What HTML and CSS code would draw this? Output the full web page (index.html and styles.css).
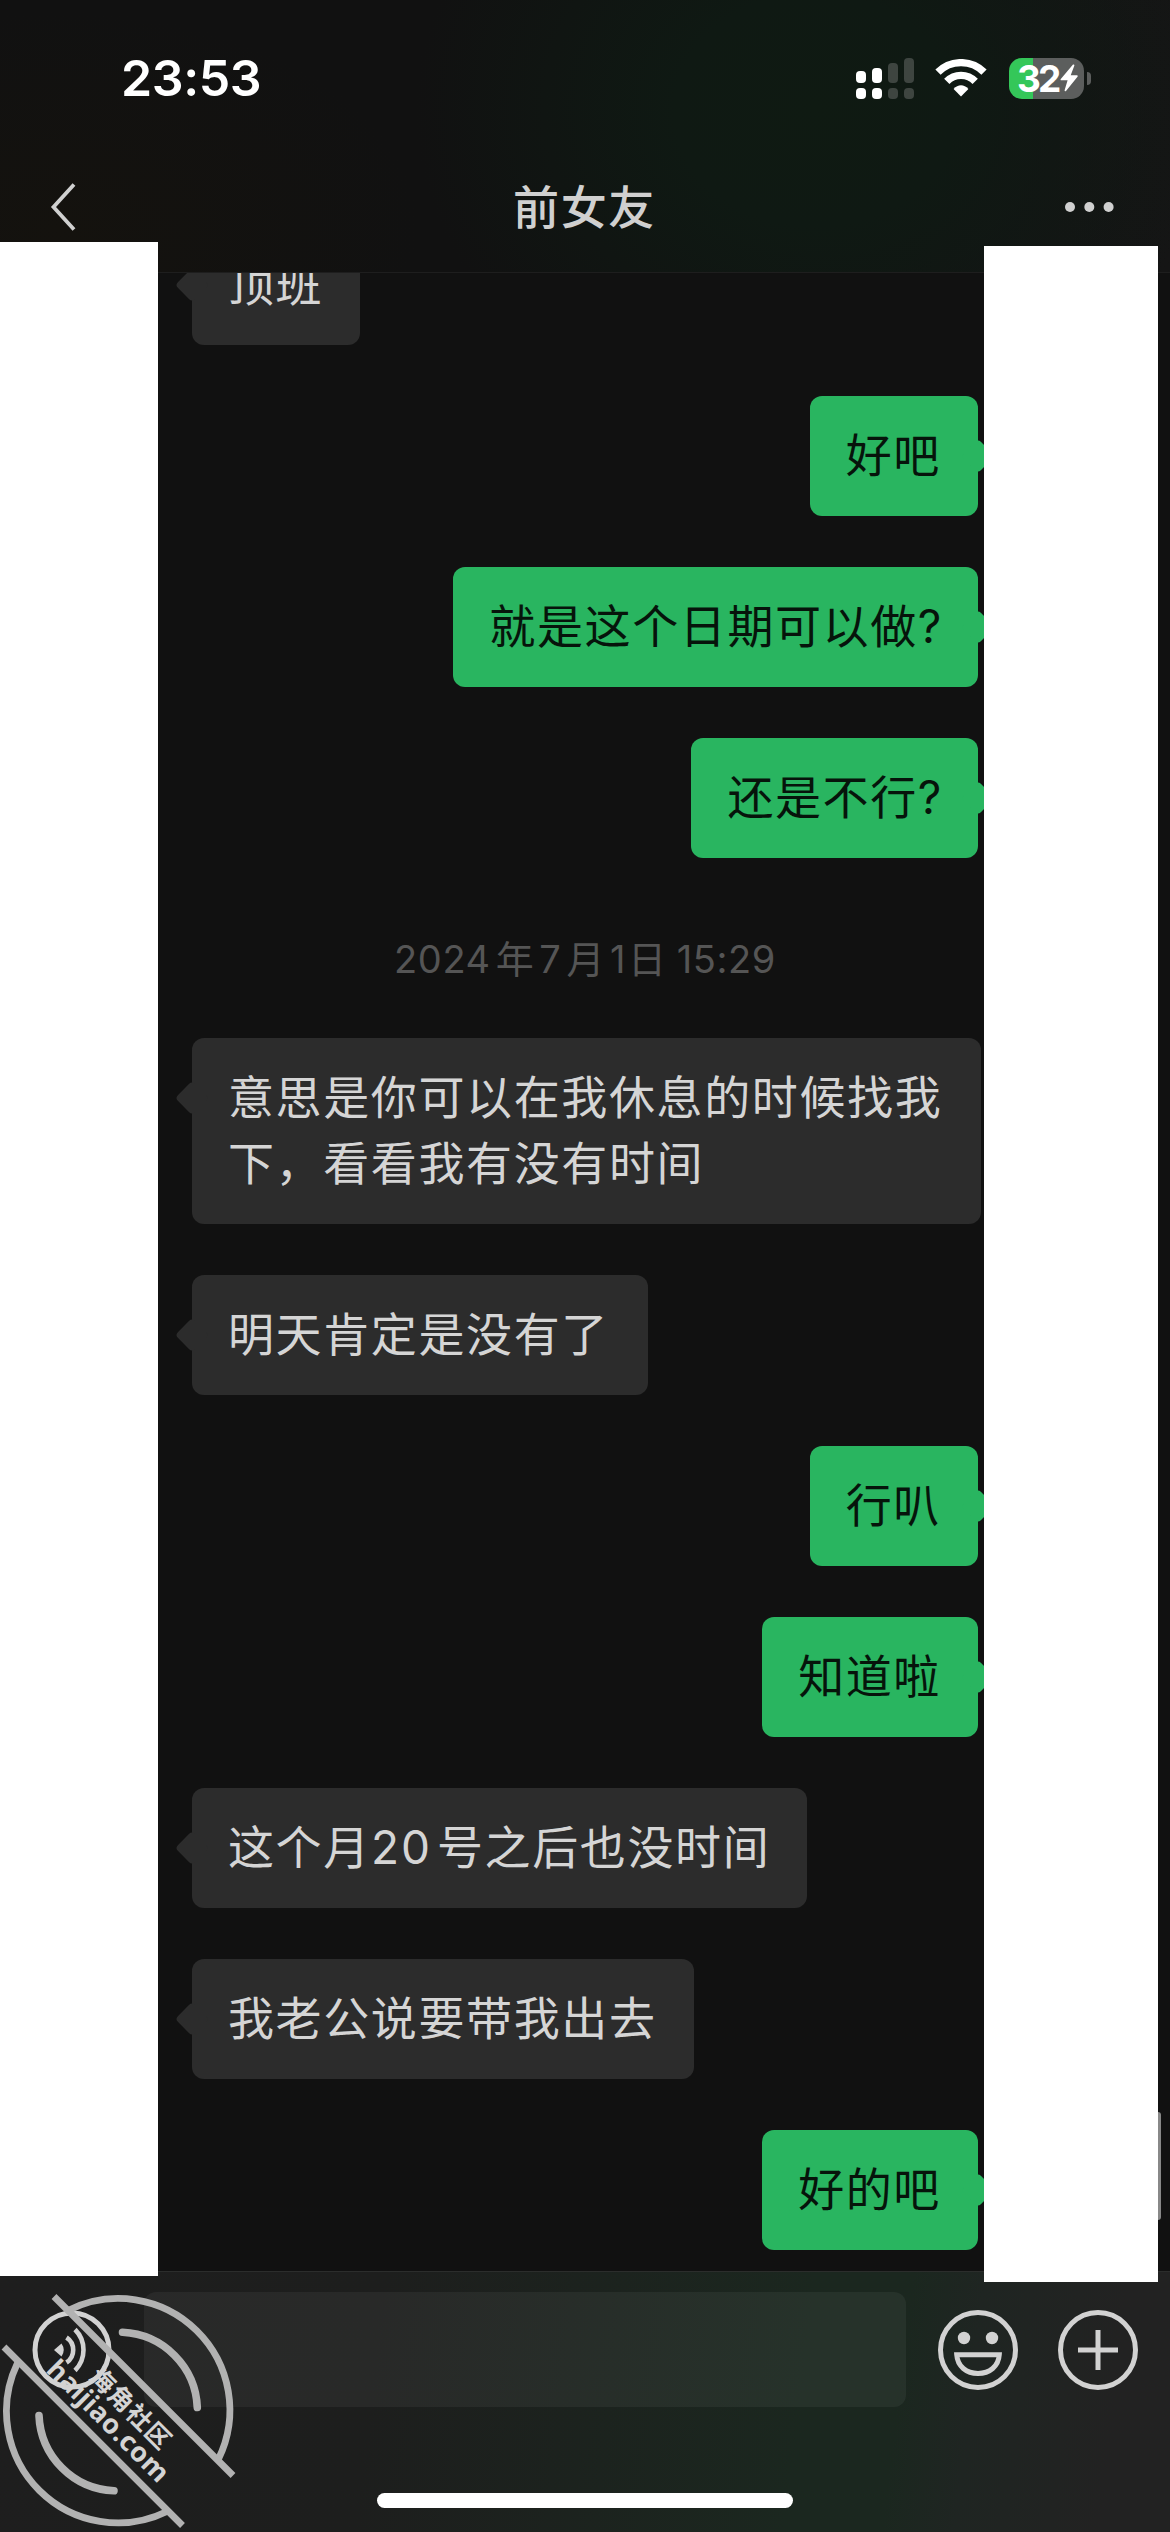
FILE: index.html
```html
<!DOCTYPE html>
<html lang="zh-CN">
<head>
<meta charset="utf-8">
<title>前女友</title>
<link rel="stylesheet" href="styles.css">
</head>
<body>
<div class="screen">
  <header class="top">
    <div class="status">
      <span class="clock">23:53</span>
      <div class="indicators">
        <svg class="signal" width="58" height="41" viewBox="0 0 58 41">
          <g fill="#fff"><rect x="0" y="13" width="10" height="12" rx="4"/><rect x="16" y="10" width="10" height="15" rx="4"/><rect x="0" y="30" width="10" height="11" rx="4"/><rect x="16" y="30" width="10" height="11" rx="4"/></g>
          <g fill="#3e4540"><rect x="32" y="5" width="10" height="20" rx="4"/><rect x="48" y="0" width="10" height="25" rx="4"/><rect x="32" y="30" width="10" height="11" rx="4"/><rect x="48" y="30" width="10" height="11" rx="4"/></g>
        </svg>
        <svg class="wifi" width="52" height="38" viewBox="0 0 52 38">
          <g fill="none" stroke="#fff" stroke-width="7.4"><path d="M3 13.2A32.5 32.5 0 0 1 49 13.2"/><path d="M11.8 22.4A19.8 19.8 0 0 1 40.2 22.4"/></g>
          <path d="M26 37.5L18.6 29.9Q22 26.2 26 26.2T33.4 29.9Z" fill="#fff"/>
        </svg>
        <div class="battery">
          <span class="level">32</span>
          <svg width="18" height="28" viewBox="0 0 18 28"><path d="M13 .5L.8 15Q0 16.2 1.5 16.2H7.6L4.600 26.300Q4.600 28 6 27L17.500 12.800Q18.300 11.500 16.800 11.300H10.700L14.400 1.600Q14.500 0 13 .5Z" fill="#fff"/></svg>
        </div>
        <i class="nub"></i>
      </div>
    </div>
    <nav class="nav">
      <svg width="28" height="50" viewBox="0 0 28 50"><path d="M25 2.500L4.500 25L25 47.500" fill="none" stroke="#d0d0d0" stroke-width="3.800"/></svg>
      <h1>前女友</h1>
      <svg width="50" height="12" viewBox="0 0 50 12" fill="#d0d0d0"><circle cx="6" cy="6" r="5"/><circle cx="25.300" cy="6" r="5"/><circle cx="44.600" cy="6" r="5"/></svg>
    </nav>
  </header>

  <main class="chat">
    <div class="msg in first">顶班</div>
    <div class="msg out">好吧</div>
    <div class="msg out ask">就是这个日期可以做?</div>
    <div class="msg out ask">还是不行?</div>
    <time class="date">2024<b>年</b>7<b>月</b>1<b class="day">日</b>15:29</time>
    <div class="msg in roomy">意思是你可以在我休息的时候找我<br>下，看看我有没有时间</div>
    <div class="msg in roomy">明天肯定是没有了</div>
    <div class="msg out">行叭</div>
    <div class="msg out">知道啦</div>
    <div class="msg in">这个月<span class="num">20</span>号之后也没时间</div>
    <div class="msg in">我老公说要带我出去</div>
    <div class="msg out">好的吧</div>
  </main>

  <footer class="composer">
    <div class="bar">
      <svg width="80" height="80" viewBox="0 0 80 80" fill="none" stroke="#d2d2d2" stroke-width="5">
        <circle cx="40" cy="40" r="37"/>
        <path d="M22 40L29.500 33.500Q34 40 29.500 46.500Z" fill="#d2d2d2" stroke="none"/>
        <path d="M34.500 27.500A15 15 0 0 1 34.500 52.500M43 19.500A29 29 0 0 1 43 60.500" stroke-width="4.600"/>
      </svg>
      <div class="field"></div>
      <svg width="80" height="80" viewBox="0 0 80 80" fill="none" stroke="#d2d2d2" stroke-width="5">
        <circle cx="40" cy="40" r="37.500"/>
        <circle cx="26" cy="28" r="6.200" fill="#d2d2d2" stroke="none"/><circle cx="54" cy="28" r="6.200" fill="#d2d2d2" stroke="none"/>
        <path d="M18.700 44.700H61.300C60.500 56.500 51.500 63.500 40 63.500S19.500 56.500 18.700 44.700Z"/>
      </svg>
      <svg width="80" height="80" viewBox="0 0 80 80" fill="none" stroke="#d2d2d2" stroke-width="5">
        <circle cx="40" cy="40" r="37.500"/><path d="M40 20V60M20 40H60"/>
      </svg>
    </div>
    <div class="home"></div>
  </footer>

  <div class="cover cover-left"></div>
  <div class="cover cover-right"></div>
  <i class="scroll"></i>

  <svg class="stamp" width="260" height="262" viewBox="0 0 260 262">
    <g fill="none" stroke="#b2b2b2" stroke-width="6.800">
      <path d="M68 40.500A111.500 111.500 0 0 1 218.500 189"/>
      <path d="M17.500 93A111.500 111.500 0 0 0 167 241.500"/>
      <path d="M54 26.500L233 205.500M4 77L182.500 255.500"/>
      <path d="M122.500 62.300A78.500 78.500 0 0 1 197.300 137.500M39 145.500A78.500 78.500 0 0 0 114 220.800" stroke-width="7.600" stroke-linecap="round"/>
    </g>
    <g fill="#d4d4d4" font-weight="700">
      <text transform="translate(87.500 108) rotate(45)" font-size="25" textLength="103" font-family="Noto Sans CJK SC, sans-serif">海角社区</text>
      <text transform="translate(45 101) rotate(45)" font-size="27" textLength="160" font-family="Noto Sans, sans-serif">haijiao.com</text>
    </g>
  </svg>
</div>
</body>
</html>
```

FILE: styles.css
```css
* { box-sizing: border-box; }

body {
  margin: 0;
  background: #111;
  font-family: Inter, "Noto Sans CJK SC", sans-serif;
}

.screen {
  position: relative;
  display: flex;
  flex-direction: column;
  width: 1170px;
  height: 2532px;
  overflow: hidden;
  background: #111;
}

svg { display: block; flex: none; }

/* status bar and title */
.top {
  flex: none;
  height: 273px;
  border-bottom: 1px solid #1e1e1e;
  background:
    radial-gradient(ellipse 400px 330px at 815px 110px, #0f1a12 0%, #0f1913 35%, rgba(17, 20, 18, 0) 100%),
    radial-gradient(ellipse 360px 220px at 60px 230px, #14120e 0%, rgba(17, 17, 17, 0) 100%),
    linear-gradient(90deg, #111 60%, #151515 100%);
}

.status {
  display: flex;
  justify-content: space-between;
  height: 156px;
  padding: 0 79px 0 121px;
  align-items: center;
}

.clock {
  color: #fff;
  font-size: 50px;
  font-weight: 600;
  line-height: 60px;
  letter-spacing: -0.4px;
}

.indicators { display: flex; align-items: center; }
.wifi { margin: 0 22px 0 21px; }

.battery {
  display: flex;
  align-items: center;
  gap: 1px;
  width: 75px;
  height: 41px;
  padding-left: 8px;
  border-radius: 13px;
  background: linear-gradient(90deg, #34c759 24px, #5c5e5d 24px);
}

.level {
  width: 42px;
  color: #fff;
  font-size: 37px;
  font-weight: 700;
  line-height: 41px;
  letter-spacing: -3px;
}

.nub {
  width: 4px;
  height: 13px;
  margin-left: 3px;
  border-radius: 0 4px 4px 0;
  background: #5c5e5d;
}

.nav {
  display: flex;
  align-items: center;
  justify-content: space-between;
  height: 102px;
  padding: 0 56px 0 49px;
}

.nav h1 {
  margin: 0 0 0 28px;
  color: #d0d0d0;
  font-size: 46px;
  font-weight: 500;
  letter-spacing: 1.6px;
  line-height: 66px;
}

/* conversation */
.chat {
  flex: none;
  display: flex;
  flex-direction: column;
  align-items: flex-start;
  gap: 51px;
  height: 1998px;
  padding: 0 192px;
  overflow: hidden;
}

.msg {
  position: relative;
  flex: none;
  padding: 26px 37px 28px 36px;
  border-radius: 12px;
  font-size: 46px;
  letter-spacing: 1.62px;
  line-height: 66px;
  white-space: nowrap;
}

.msg::before {
  content: "";
  position: absolute;
  top: 48px;
  width: 24px;
  height: 24px;
  border-radius: 4px;
  background: inherit;
  transform: rotate(45deg);
}

.in { background: #2c2c2c; color: #d5d5d5; }
.in::before { left: -12px; }
.out { align-self: flex-end; background: #29b560; color: #06140b; }
.out::before { right: -12px; }
.first { margin-top: -48px; }
.ask { padding-right: 35px; }
.roomy { padding-right: 39px; }
.num { margin-right: 5px; letter-spacing: 2px; }

.date {
  align-self: center;
  flex: none;
  height: 78px;
  color: #555;
  font-size: 38px;
  line-height: 100px;
  letter-spacing: 0.6px;
  white-space: nowrap;
}
.date b { margin: 0 5px; font-weight: 400; }
.date .day { margin: 0 10px 0 2px; }

/* input bar */
.composer {
  flex: none;
  display: flex;
  flex-direction: column;
  align-items: center;
  justify-content: space-between;
  height: 261px;
  padding: 20px 0 24px;
  border-top: 1px solid #2b2d2c;
  background: linear-gradient(97deg, #1e1e1e 0%, #1d1e1d 32%, #1b271f 68%, #1b271f 76%, #1f2522 82%, #222 94%);
}

.bar {
  display: flex;
  align-items: center;
  width: 100%;
  padding: 0 32px;
}
.field {
  width: 762px;
  height: 115px;
  margin: 0 32px;
  border-radius: 12px;
  background: rgba(255, 255, 255, 0.05);
}
.bar svg + svg { margin-left: 40px; }

.home {
  width: 416px;
  height: 15px;
  border-radius: 8px;
  background: #fff;
}

/* blocks laid over the avatar columns */
.cover { position: absolute; background: #fff; }
.cover-left { left: 0; top: 242px; width: 158px; height: 2034px; }
.cover-right { left: 984px; top: 246px; width: 174px; height: 2036px; }

.scroll {
  position: absolute;
  left: 1158px;
  top: 2112px;
  width: 3px;
  height: 108px;
  border-radius: 0 3px 3px 0;
  background: #888;
}

.stamp { position: absolute; left: 0; top: 2270px; }
```
